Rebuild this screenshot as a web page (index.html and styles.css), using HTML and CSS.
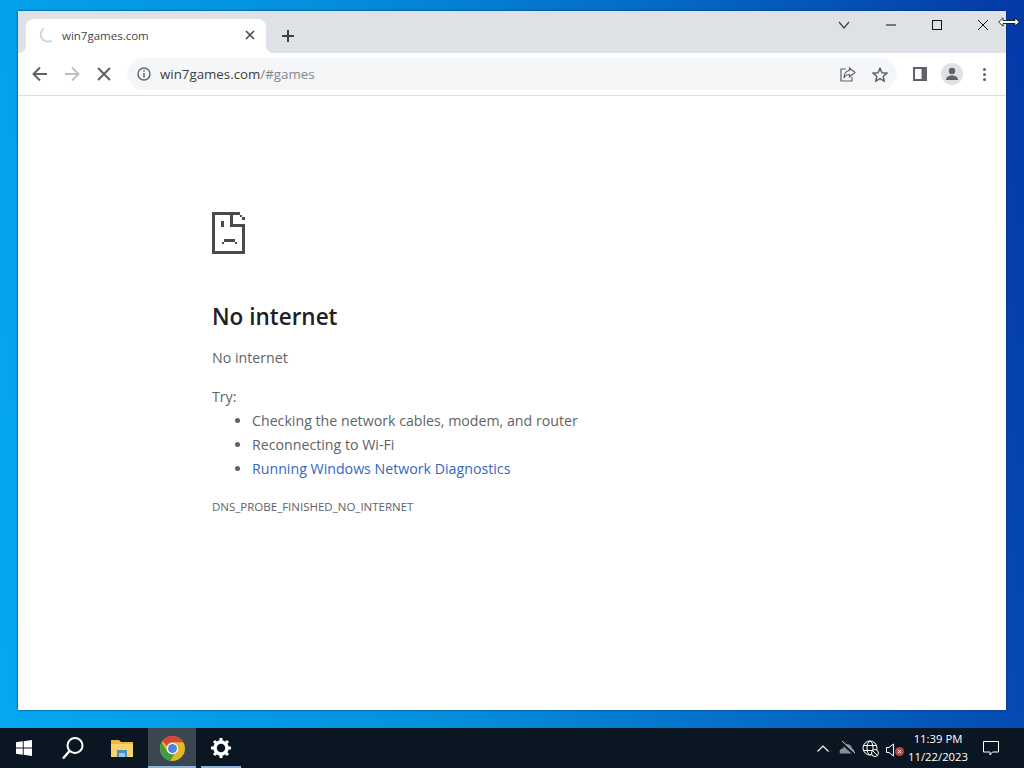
FILE: index.html
```html
<!DOCTYPE html>
<html lang="en">
<head>
  <meta charset="UTF-8">
  <title>win7games.com</title>
  <link rel="stylesheet" href="styles.css">
</head>
<body>
  <div class="desktop">
    <div class="window">
      <div class="tabstrip">
        <div class="tab">
          <svg class="tab-spinner" width="16" height="16" viewBox="0 0 16 16"><path d="M7 1.500A6.800 6.800 0 0 0 14.500 13.500" fill="none" stroke="#c9d3d8" stroke-width="1.800"/></svg>
          <span class="tab-title">win7games.com</span>
          <svg class="tab-close" width="10" height="10" viewBox="0 0 10 10"><path d="M1 1l8 8M9 1l-8 8" stroke="#45484c" stroke-width="1.600"/></svg>
        </div>
        <svg class="new-tab" width="12" height="12" viewBox="0 0 12 12"><path d="M6 0v12M0 6h12" stroke="#3c4043" stroke-width="2"/></svg>
        <div class="caption">
          <svg width="12" height="8" viewBox="0 0 12 8"><path d="M1 1l5 6 5-6" fill="none" stroke="#3c4043" stroke-width="1.200"/></svg>
          <svg width="10" height="10" viewBox="0 0 10 10"><path d="M0 5h10" stroke="#111" stroke-width="1"/></svg>
          <svg width="10" height="10" viewBox="0 0 10 10"><rect x=".5" y=".5" width="9" height="9" fill="none" stroke="#111"/></svg>
          <svg width="10" height="10" viewBox="0 0 10 10"><path d="M0 0l10 10M10 0L0 10" stroke="#111" stroke-width="1"/></svg>
        </div>
      </div>

      <div class="toolbar">
        <svg class="nav-btn" width="16" height="16" viewBox="0 0 16 16"><path d="M15 8H2M8 1.500L1.500 8 8 14.500" fill="none" stroke="#5f6368" stroke-width="2"/></svg>
        <svg class="nav-btn" width="16" height="16" viewBox="0 0 16 16"><path d="M1 8h13M8 1.500L14.500 8 8 14.500" fill="none" stroke="#bdc1c6" stroke-width="2"/></svg>
        <svg class="nav-btn stop" width="14" height="14" viewBox="0 0 14 14"><path d="M1 1l12 12M13 1L1 13" stroke="#5f6368" stroke-width="2"/></svg>
        <div class="omnibox">
          <svg width="14" height="14" viewBox="0 0 14 14"><circle cx="7" cy="7" r="6" fill="none" stroke="#5f6368" stroke-width="1.400"/><path d="M7 6v4.500M7 3.300v1.500" stroke="#5f6368" stroke-width="1.500"/></svg>
          <span class="url">win7games.com<span class="url-path">/#games</span></span>
          <div class="omni-actions">
            <svg width="16" height="15" viewBox="0 0 16 15"><path d="M6 2H1v12h11v-4" fill="none" stroke="#5f6368" stroke-width="1.200"/><path d="M9.500 1l5.500 4.500-5.500 4.500V7.500C7 7.500 5 8.500 4 11 4 7 6 4 9.500 3.500z" fill="none" stroke="#5f6368" stroke-width="1.200"/></svg>
            <svg width="16" height="15" viewBox="0 0 16 15"><path d="M8 1.300l2 4.400 4.800.5-3.600 3.200 1 4.700L8 11.700l-4.200 2.400 1-4.700L1.200 6.200 6 5.700z" fill="none" stroke="#5f6368" stroke-width="1.500"/></svg>
          </div>
        </div>
        <svg class="side-panel" width="14" height="14" viewBox="0 0 14 14"><path d="M0 0h14v14H0z" fill="#5f6368"/><rect x="2" y="2" width="6.500" height="10" fill="#fff"/></svg>
        <div class="avatar">
          <svg width="14" height="14" viewBox="0 0 14 14"><circle cx="7" cy="4" r="3.200" fill="#5f6368"/><path d="M1 13c0-3 2.500-4.500 6-4.500s6 1.500 6 4.500z" fill="#5f6368"/></svg>
        </div>
        <div class="menu-dots"><i></i><i></i><i></i></div>
      </div>

      <div class="page">
        <svg class="sad-page" width="33" height="42" viewBox="0 0 33 42" shape-rendering="crispEdges" fill="#4a4a4a">
          <path d="M0 0h26v3H3v36h27V12h3v30H0z"/>
          <path d="M18 0h3v12h12v3H18z"/>
          <path d="M26 0h2v3h-2zM28 3h2v2h-2zM30 5h3v3h-3z"/>
          <path d="M9 9h3v6H9zM10 30h2v2h-2zM12 27h11v3H12zM23 30h2v2h-2z"/>
        </svg>
        <h1>No internet</h1>
        <p class="sub">No internet</p>
        <p class="try">Try:</p>
        <ul class="tips">
          <li>Checking the network cables, modem, and router</li>
          <li>Reconnecting to Wi-Fi</li>
          <li><a href="#">Running Windows Network Diagnostics</a></li>
        </ul>
        <div class="error-code">DNS_PROBE_FINISHED_NO_INTERNET</div>
      </div>
    </div>
  </div>

  <div class="taskbar">
    <div class="task-btn">
      <svg width="16" height="16" viewBox="0 0 16 16"><path d="M0 2.300l6.800-1v6.200H0zM7.700 1.200L16 0v7.500H7.700zM0 8.400h6.800v6.300L0 13.700zM7.700 8.400H16V16l-8.300-1.200z" fill="#fff"/></svg>
    </div>
    <div class="task-btn">
      <svg width="24" height="24" viewBox="0 0 24 24"><circle cx="14" cy="9.500" r="7.500" fill="none" stroke="#fff" stroke-width="2"/><path d="M8.500 15L2 22.500" stroke="#fff" stroke-width="2.400"/></svg>
    </div>
    <div class="task-btn">
      <svg width="22" height="18" viewBox="0 0 22 18"><path d="M0 1h8l2 2h12v15H0z" fill="#e8b93e"/><path d="M0 5h22v13H0z" fill="#f7d46a"/><path d="M6 11h10v7h-2v-4H8v4H6z" fill="#4a8fc4"/><path d="M8 14h6v4H8z" fill="#9cc8e8"/></svg>
    </div>
    <div class="task-btn active">
      <svg width="25" height="25" viewBox="0 0 24 24">
        <circle cx="12" cy="12" r="12" fill="#e0b92a"/>
        <path d="M12 0a12 12 0 0 1 10.400 6H12a6 6 0 0 0-5.500 3.500L2.400 4.800A12 12 0 0 1 12 0z" fill="#d9443a"/>
        <path d="M1.600 6A12 12 0 0 0 10 23.800l4-6.500a6 6 0 0 1-7.500-3z" fill="#3f9c46"/>
        <circle cx="12" cy="12" r="5.500" fill="#fff"/>
        <circle cx="12" cy="12" r="4.300" fill="#4a86e0"/>
      </svg>
    </div>
    <div class="task-btn running">
      <svg width="20" height="20" viewBox="0 0 20 20"><circle cx="10" cy="10" r="6" fill="none" stroke="#fff" stroke-width="3.500"/><path d="M10 0v4M10 16v4M0 10h4M16 10h4M3 3l2.800 2.800M14.200 14.200L17 17M17 3l-2.800 2.800M5.800 14.200L3 17" stroke="#fff" stroke-width="3"/></svg>
    </div>

    <div class="tray">
      <svg class="tray-up" width="12" height="7" viewBox="0 0 12 7"><path d="M.5 6.500L6 1l5.500 5.500" fill="none" stroke="#fff" stroke-width="1.100"/></svg>
      <svg width="16" height="14" viewBox="0 0 16 14"><path d="M1 12.500c-1-3 .5-5 3-5 .5-3 3-5 6-4 2 .8 3 2.500 3 4 2 .5 3 3 2 5z" fill="#8a8d91"/><path d="M2 1l13 12" stroke="#0b1722" stroke-width="2.500"/><path d="M3 0l13 12" stroke="#d0d3d6" stroke-width="1"/></svg>
      <svg width="17" height="17" viewBox="0 0 17 17"><circle cx="8" cy="8" r="7" fill="none" stroke="#fff" stroke-width="1"/><ellipse cx="8" cy="8" rx="3" ry="7" fill="none" stroke="#fff"/><path d="M1 5.500h14M1 10.500h14" stroke="#fff"/><circle cx="13" cy="13" r="3.500" fill="#0b1722" stroke="#fff"/><path d="M10.800 10.800l4.400 4.400" stroke="#fff"/></svg>
      <div class="volume">
        <svg width="10" height="14" viewBox="0 0 10 14"><path d="M.5 4.500h2.500L7.500 1v12L3 9.500H.5z" fill="none" stroke="#fff"/></svg>
        <svg class="mute" width="9" height="9" viewBox="0 0 9 9"><circle cx="4.500" cy="4.500" r="4.500" fill="#d8383a"/><path d="M2.800 2.800l3.400 3.400M6.200 2.800L2.800 6.200" stroke="#fff"/></svg>
      </div>
      <div class="clock"><span>11:39 PM</span><span>11/22/2023</span></div>
      <svg class="notify" width="16" height="15" viewBox="0 0 16 15"><path d="M.5.500h15v10.500H9.500L7 14V11H.5z" fill="none" stroke="#fff"/></svg>
    </div>
  </div>

  <svg class="cursor" width="22" height="10" viewBox="0 0 22 10"><path d="M.7 5L5 .8V3.500h12V.8L21.300 5 17 9.200V6.500H5v2.700z" fill="#fff" stroke="#000" stroke-width=".8"/></svg>
</body>
</html>
```

FILE: styles.css
```css
html, body {
  margin: 0;
  height: 100%;
  overflow: hidden;
}
body {
  width: 1024px;
  height: 768px;
  display: flex;
  flex-direction: column;
  position: relative;
  font-family: "Open Sans", "Noto Sans", sans-serif;
  background: #0a5cc0;
}
.desktop {
  height: 728px;
  box-sizing: border-box;
  padding: 11px 18px 18px 18px;
  background: linear-gradient(80deg, #05a8f2 0%, #0490dc 38%, #0468c4 70%, #0438a8 100%);
}
.window {
  width: 988px;
  height: 699px;
  display: flex;
  flex-direction: column;
  background: #fff;
  box-shadow: 0 0 2px #0a2a5a;
}
.tabstrip {
  height: 42px;
  flex-shrink: 0;
  display: flex;
  align-items: flex-end;
  background: #dee1e6;
  position: relative;
  padding-left: 8px;
}
.tab {
  width: 240px;
  height: 34px;
  display: flex;
  align-items: center;
  box-sizing: border-box;
  padding: 0 11px 2px 11px;
  background: #fff;
  border-radius: 8px 8px 0 0;
  position: relative;
}
.tab::before,
.tab::after {
  content: "";
  position: absolute;
  bottom: 0;
  width: 8px;
  height: 8px;
}
.tab::before {
  left: -8px;
  background: radial-gradient(circle at 0 0, transparent 8px, #fff 8.5px);
}
.tab::after {
  right: -8px;
  background: radial-gradient(circle at 100% 0, transparent 8px, #fff 8.5px);
}
.tab-spinner {
  flex-shrink: 0;
}
.tab-title {
  margin-left: 9px;
  font-size: 11.5px;
  color: #45484c;
  flex: 1;
}
.new-tab {
  margin: 0 0 11px 16px;
}
.caption {
  position: absolute;
  top: 9px;
  right: 18px;
  display: flex;
  align-items: center;
  gap: 36px;
}
.toolbar {
  height: 42px;
  flex-shrink: 0;
  display: flex;
  align-items: center;
  border-bottom: 1px solid #dadce0;
  padding-left: 14px;
}
.nav-btn {
  margin-right: 16px;
}
.nav-btn.stop {
  margin-left: 1px;
}
.omnibox {
  width: 770px;
  height: 32px;
  box-sizing: border-box;
  display: flex;
  align-items: center;
  padding: 0 9px 0 10px;
  background: #f5f6f7;
  border-radius: 16px;
}
.url {
  margin-left: 9px;
  font-size: 13.3px;
  color: #3c4043;
  flex: 1;
}
.url-path {
  color: #80868b;
}
.omni-actions {
  display: flex;
  gap: 16px;
}
.side-panel {
  margin-left: 16px;
}
.avatar {
  width: 22px;
  height: 22px;
  margin-left: 14px;
  border-radius: 50%;
  background: #dee1e6;
  display: flex;
  align-items: center;
  justify-content: center;
}
.menu-dots {
  margin-left: 20px;
  display: flex;
  flex-direction: column;
  gap: 2px;
}
.menu-dots i {
  display: block;
  width: 3px;
  height: 3px;
  border-radius: 50%;
  background: #5f6368;
}
.page {
  flex: 1;
  padding: 116px 0 0 194px;
  color: #5f6368;
}
.sad-page {
  display: block;
}
h1 {
  margin: 46px 0 0 0;
  font-size: 22.5px;
  line-height: 34px;
  font-weight: 600;
  color: #202124;
}
.sub {
  margin: 12px 0 0 0;
  font-size: 14.2px;
  line-height: 24px;
}
.try {
  margin: 15px 0 0 0;
  font-size: 14.2px;
  line-height: 24px;
}
.tips {
  margin: 0;
  padding-left: 40px;
  font-size: 14.2px;
  line-height: 24px;
}
.tips a {
  color: #3367c4;
  text-decoration: none;
}
.error-code {
  margin-top: 18px;
  font-size: 11.5px;
  line-height: 16px;
}
.taskbar {
  height: 40px;
  display: flex;
  background: #0a1722;
}
.task-btn {
  width: 48px;
  height: 40px;
  margin-right: 1px;
  box-sizing: border-box;
  display: flex;
  align-items: center;
  justify-content: center;
  position: relative;
}
.task-btn.active {
  margin-left: 1px;
  background: #3a4650;
}
.task-btn.active::after,
.task-btn.running::after {
  content: "";
  position: absolute;
  bottom: 0;
  height: 2px;
  background: #8db4d8;
}
.task-btn.active::after {
  left: 0;
  right: 0;
}
.task-btn.running::after {
  left: 4px;
  right: 4px;
}
.tray {
  margin-left: auto;
  display: flex;
  align-items: center;
  color: #fff;
  gap: 7px;
  padding-right: 25px;
}
.tray-up {
  margin-right: 3px;
}
.volume {
  position: relative;
  width: 18px;
  height: 16px;
}
.mute {
  position: absolute;
  right: 0;
  bottom: 0;
}
.clock {
  display: flex;
  flex-direction: column;
  align-items: center;
  font-size: 11.3px;
  line-height: 18px;
  margin: 0 8px 0 -3px;
}
.cursor {
  position: absolute;
  left: 998px;
  top: 17px;
}
```
